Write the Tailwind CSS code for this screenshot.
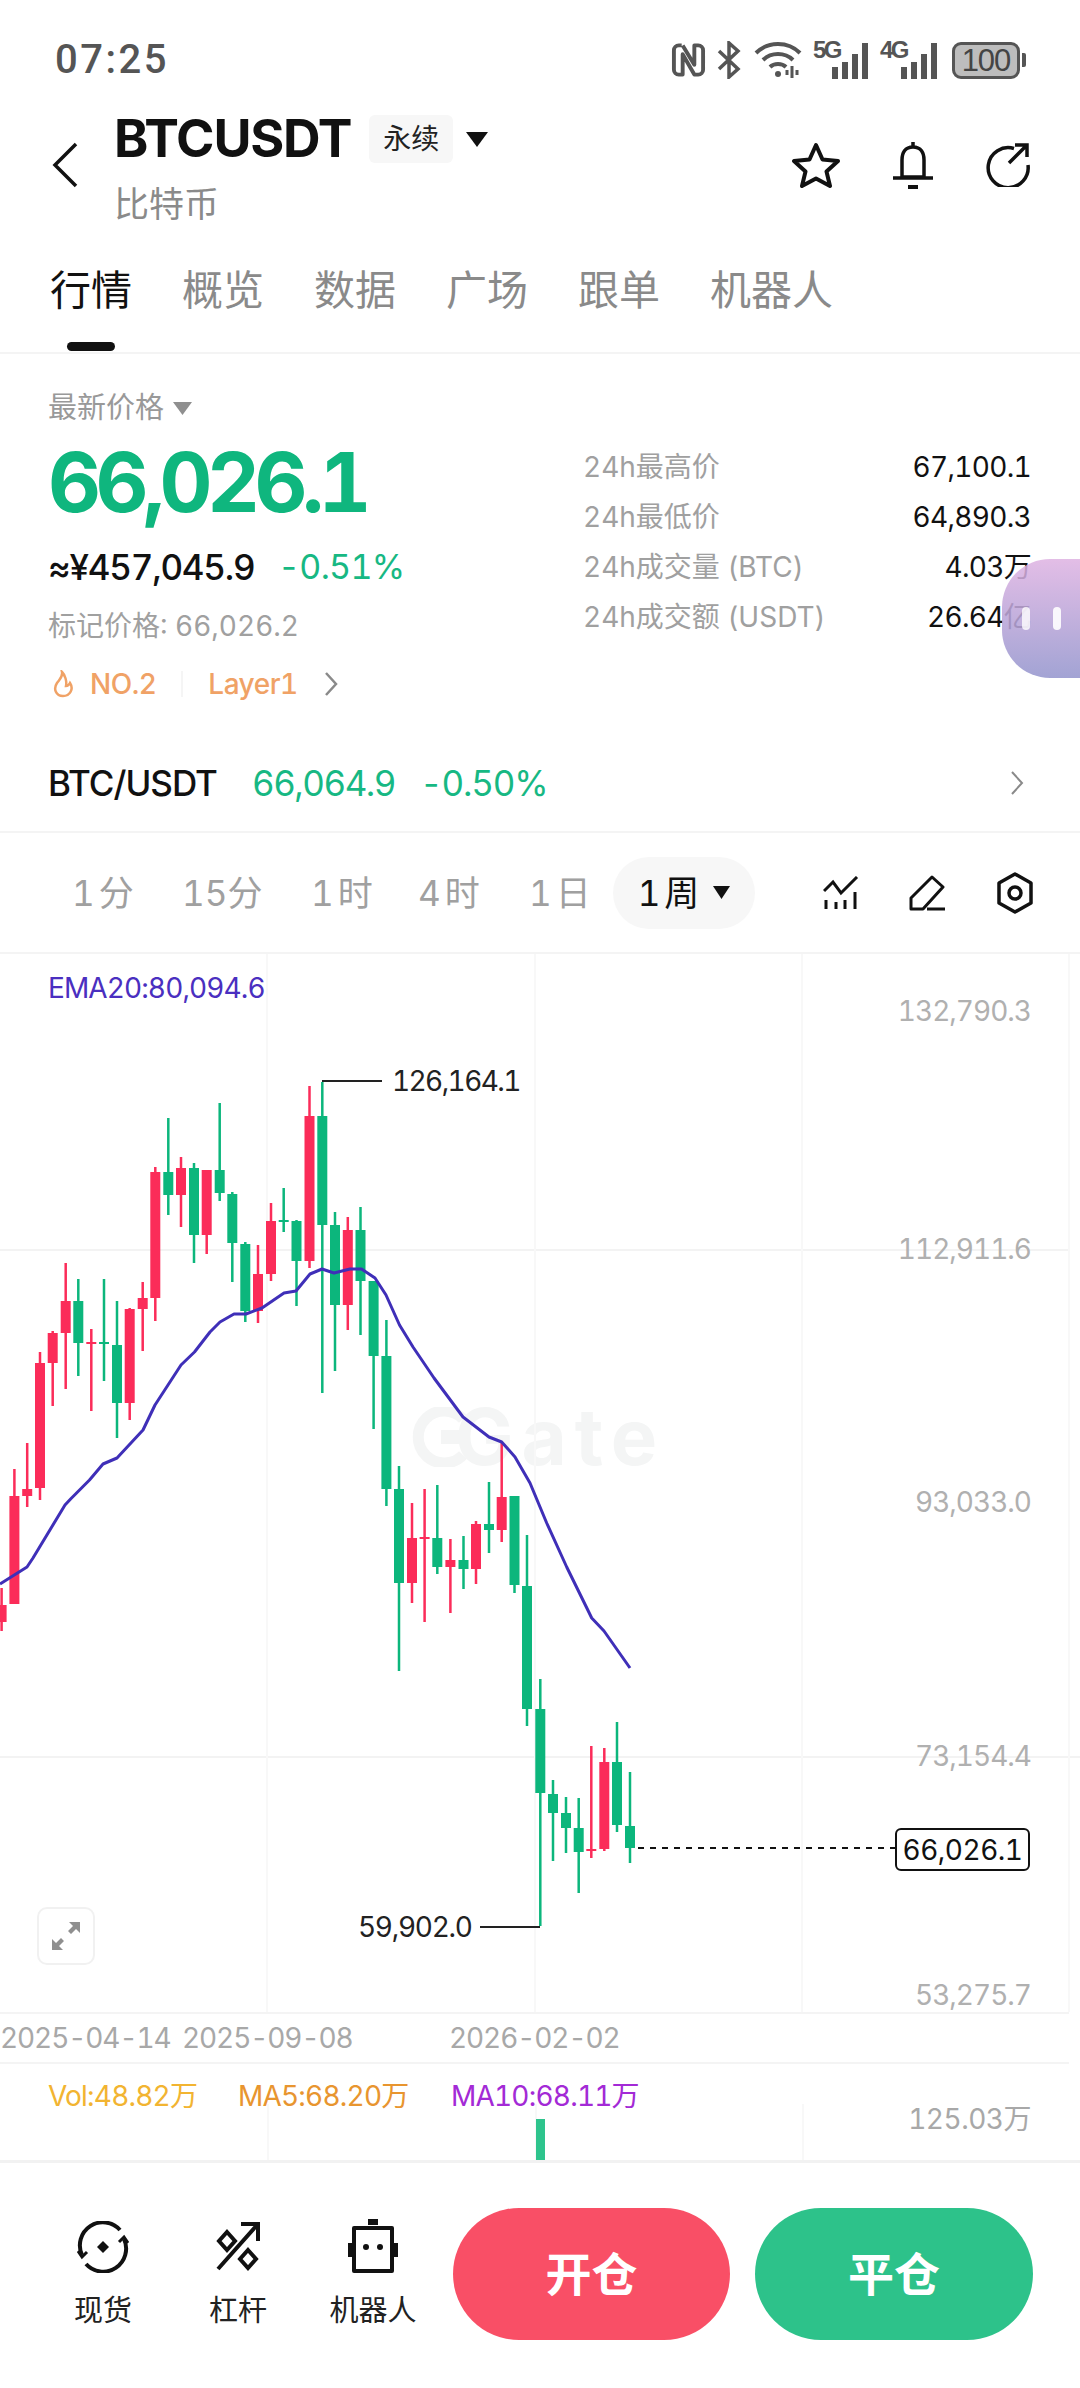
<!DOCTYPE html>
<html lang="zh">
<head>
  <meta charset="UTF-8">
  <meta name="viewport" content="width=device-width, initial-scale=1.0">
  <title>BTCUSDT</title>
  <script src="https://cdn.jsdelivr.net/npm/@tailwindcss/browser@4"></script>
</head>
<body class="bg-white text-[#111] tabular-nums [font-family:Inter,'Noto_Sans_CJK_SC',sans-serif]">
<div class="relative w-[1080px] h-[2388px] overflow-hidden flex flex-col">

  <!-- Status bar -->
  <div class="h-[112px] shrink-0 pl-[55px] pr-[54px] pt-[36px] flex justify-between items-start text-[#555]">
    <span class="text-[40px] leading-[48px] font-medium tracking-[2.5px] [font-family:Roboto,sans-serif]">07:25</span>
    <div class="flex items-center h-[48px]">
      <svg width="35" height="36" viewBox="0 0 36 36" fill="none" stroke="#555" stroke-width="4"><path d="M11 3H8a5 5 0 0 0-5 5v20a5 5 0 0 0 5 5h4V12l12 21h4a5 5 0 0 0 5-5V8a5 5 0 0 0-5-5h-4v20L12 3" stroke-linejoin="round"/></svg>
      <svg class="ml-[10px]" width="26" height="38" viewBox="0 0 26 38" fill="none" stroke="#555" stroke-width="3.5"><path d="M3 10l19 18-9 8V2l9 8L3 28"/></svg>
      <svg class="ml-[12px]" width="48" height="38" viewBox="0 0 48 38" fill="none" stroke="#555" stroke-width="4"><path d="M2 12c12-12 32-12 44 0M9 19c8-8 22-8 30 0M16 26c4-4 12-4 16 0"/><circle cx="24" cy="33" r="3" fill="#555" stroke="none"/><path d="M38 25v12M43 29v5M33 29v5" stroke-width="3"/></svg>
      <div class="relative w-[55px] h-[38px] ml-[11px]">
        <span class="absolute left-0 top-[-4px] text-[24px] leading-[26px] font-bold tracking-[-2.5px] [font-family:'Liberation_Sans',sans-serif]">5G</span>
        <div class="absolute right-0 bottom-0 flex items-end gap-[4px]">
          <i class="block w-[6px] h-[12px] bg-[#555]"></i><i class="block w-[6px] h-[17px] bg-[#555]"></i><i class="block w-[6px] h-[25px] bg-[#555]"></i><i class="block w-[6px] h-[36px] bg-[#555]"></i>
        </div>
      </div>
      <div class="relative w-[57px] h-[38px] ml-[12px]">
        <span class="absolute left-0 top-[-4px] text-[24px] leading-[26px] font-bold tracking-[-2.5px] [font-family:'Liberation_Sans',sans-serif]">4G</span>
        <div class="absolute right-0 bottom-0 flex items-end gap-[4px]">
          <i class="block w-[6px] h-[12px] bg-[#555]"></i><i class="block w-[6px] h-[17px] bg-[#555]"></i><i class="block w-[6px] h-[25px] bg-[#555]"></i><i class="block w-[6px] h-[36px] bg-[#555]"></i>
        </div>
      </div>
      <div class="flex items-center ml-[15px]">
        <div class="w-[68px] h-[37px] rounded-[9px] border-[3px] border-[#555] bg-[#bdbdbd] flex items-center justify-center text-[31px] leading-none tracking-[-1px] text-[#444] [font-family:'Liberation_Sans',sans-serif]">100</div>
        <i class="block w-[4px] h-[14px] ml-[2px] rounded-r-[2px] bg-[#555]"></i>
      </div>
    </div>
  </div>

  <!-- Header -->
  <div class="h-[120px] shrink-0 relative pl-[52px] pr-[50px] flex items-center">
    <svg class="mt-[-14px] mr-[36px]" width="26" height="46" viewBox="0 0 26 46" fill="none" stroke="#111" stroke-width="3.5"><path d="M24 2L3 23l21 21"/></svg>
    <div class="flex-1 self-start pt-[3px]">
      <div class="flex items-center h-[48px]">
        <span class="text-[52px] leading-[48px] font-bold tracking-[-1.2px]">BTCUSDT</span>
        <span class="ml-[18px] w-[84px] h-[48px] rounded-[6px] bg-[#f7f7f7] flex items-center justify-center text-[28px] text-[#222]">永续</span>
        <svg class="ml-[12px]" width="24" height="15" viewBox="0 0 24 15"><path d="M1 0h22L12 15z" fill="#111"/></svg>
      </div>
      <div class="mt-[23px] text-[35px] leading-[36px] text-[#8a8a8a]">比特币</div>
    </div>
    <div class="flex items-center gap-[52px] mt-[-14px]">
      <svg width="48" height="46" viewBox="0 0 48 46" fill="none" stroke="#111" stroke-width="4" stroke-linejoin="round"><path d="M24 3l6.500 14.500L46 19 34.500 29.500 38 44 24 36.500 10 44l3.500-14.500L2 19l15.500-1.500z"/></svg>
      <svg width="42" height="48" viewBox="0 0 42 48" fill="none" stroke="#111" stroke-width="3.500"><path d="M21 6c-8 0-11 6-11 13v17h22V19c0-7-3-13-11-13zM21 1v5M1 37h40"/><path d="M16 46h10" stroke-width="4"/></svg>
      <svg width="44" height="44" viewBox="0 0 44 44" fill="none" stroke="#111" stroke-width="3.500"><path d="M28 5.500A20 20 0 1 0 42 22"/><path d="M23 20L41 2M29 2h12v12"/></svg>
    </div>
  </div>

  <!-- Tabs -->
  <div class="h-[122px] shrink-0 relative border-b-2 border-[#f4f4f4] pl-[50px] flex gap-[50px] pt-[34px] text-[41px] leading-[48px] text-[#8a8a8a]">
    <span class="text-[#111]">行情</span><span>概览</span><span>数据</span><span>广场</span><span>跟单</span><span>机器人</span>
    <i class="absolute left-[67px] bottom-[1px] w-[48px] h-[9px] rounded-full bg-[#111]"></i>
  </div>

  <!-- Price block -->
  <div class="h-[479px] shrink-0 relative border-b-2 border-[#f4f4f4] pl-[48px] pr-[49px] flex">
    <div class="w-[535px] shrink-0">
      <div class="mt-[36px] flex items-center text-[29px] leading-[36px] text-[#999]">最新价格
        <svg class="ml-[9px]" width="19" height="13" viewBox="0 0 19 13"><path d="M0 0h19L9.500 13z" fill="#8f8f8f"/></svg>
      </div>
      <div class="mt-[9px] text-[82px] leading-[96px] font-bold tracking-[-5.5px] text-[#0fb67e]">66,026.1</div>
      <div class="mt-[14px] flex items-center text-[35px] leading-[44px]">
        <span class="font-medium tracking-[-1.2px] w-[230px]">≈¥457,045.9</span>
        <span class="text-[#17b883] text-[34px] tracking-[-0.7px]">-0.51%</span>
      </div>
      <div class="mt-[17px] text-[28px] leading-[40px] text-[#a0a0a0]">标记价格: 66,026.2</div>
      <div class="mt-[18px] flex items-center text-[28px] leading-[40px] text-[#f0a266]">
        <svg class="ml-[4px]" width="23" height="28" viewBox="0 0 23 28" fill="none" stroke="#f0a266" stroke-width="2.500"><path d="M10 2c1 5-2 7-5 11-4 6-1 13 6 13s11-7 7-13c-1 2-2 3-4 3 1-5-1-11-4-14z"/></svg>
        <span class="ml-[15px] font-medium tracking-[-0.5px]">NO.2</span>
        <i class="block w-[2px] h-[26px] bg-[#f5f5f5] mx-[25px]"></i>
        <span class="font-medium tracking-[-0.5px]">Layer1</span>
        <svg class="ml-[26px]" width="14" height="26" viewBox="0 0 14 26" fill="none" stroke="#8a8a8a" stroke-width="2.500"><path d="M2 2l10 11L2 24"/></svg>
      </div>
    </div>
    <div class="flex-1 pt-[88px] text-[28px] leading-[50px] text-[#a0a0a0]">
      <div class="flex justify-between"><span>24h最高价</span><span class="text-[#111] tracking-[-0.7px]">67,100.1</span></div>
      <div class="flex justify-between"><span>24h最低价</span><span class="text-[#111] tracking-[-0.7px]">64,890.3</span></div>
      <div class="flex justify-between"><span>24h成交量 (BTC)</span><span class="text-[#111] tracking-[-0.7px]">4.03万</span></div>
      <div class="flex justify-between"><span>24h成交额 (USDT)</span><span class="text-[#111] tracking-[-0.7px]">26.64亿</span></div>
    </div>
    <div class="absolute left-[48px] right-[48px] bottom-[26px] flex items-center text-[35px] leading-[44px]">
      <span class="font-medium tracking-[-1px]">BTC/USDT</span>
      <span class="ml-[35px] text-[#17b883] tracking-[-1.5px]">66,064.9</span>
      <span class="ml-[25px] text-[#17b883] tracking-[-1.2px]">-0.50%</span>
      <svg class="ml-auto mr-[8px]" width="14" height="26" viewBox="0 0 14 26" fill="none" stroke="#8a8a8a" stroke-width="2"><path d="M2 2l10 11L2 24"/></svg>
    </div>
  </div>

  <!-- Interval row -->
  <div class="h-[121px] shrink-0 relative border-b-2 border-[#f4f4f4] pl-[72px] flex items-center text-[35px] leading-[44px] text-[#a0a0a0]">
    <span class="w-[110px] tracking-[4px]">1分</span>
    <span class="w-[129px]">15分</span>
    <span class="w-[107px] tracking-[4px]">1时</span>
    <span class="w-[111px] tracking-[4px]">4时</span>
    <span class="w-[84px] tracking-[4px]">1日</span>
    <div class="w-[142px] h-[72px] rounded-full bg-[#f7f7f7] flex items-center justify-center text-[#111]">
      <span class="tracking-[4px]">1周</span>
      <svg class="ml-[10px]" width="17" height="13" viewBox="0 0 17 13"><path d="M0 0h17L8.500 13z" fill="#111"/></svg>
    </div>
    <div class="ml-auto mr-[47px] flex items-center gap-[50px]">
      <svg width="36" height="33" viewBox="0 0 36 33" fill="none" stroke="#111" stroke-width="3"><path d="M1 15l9-9 8 11L34 1"/><path d="M3 24v9M13 26v7M22 24v9M32 16v17"/></svg>
      <svg width="38" height="36" viewBox="0 0 38 36" fill="none" stroke="#111" stroke-width="3" stroke-linejoin="round"><path d="M2 34V23L23 2l11 10-20 22zM18 34h18"/></svg>
      <svg width="36" height="42" viewBox="0 0 36 42" fill="none" stroke="#111" stroke-width="3.500" stroke-linejoin="round"><path d="M18 2l16 9v20l-16 9-16-9V11z"/><circle cx="18" cy="21" r="6"/></svg>
    </div>
  </div>

  <!-- Main chart -->
  <div class="h-[1058px] shrink-0 relative text-[28px] leading-[34px] tracking-[-1px]" id="chart">
    <div class="absolute left-[411px] top-[451px] flex items-center text-[#f4f5f5] text-[78px] leading-[64px] font-bold tracking-[8px]">
      <svg width="60" height="60" viewBox="0 0 60 60" fill="none"><path d="M52 48A26 26 0 1 1 52 12" stroke="#f4f5f5" stroke-width="11"/><rect x="30" y="23" width="26" height="14" fill="#f4f5f5"/></svg>
      <span class="-ml-[16px]">Gate</span>
    </div>
    <svg id="candles" class="absolute left-0 top-0" width="1080" height="1058" viewBox="0 954 1080 1058"></svg>
    <span class="absolute left-[48px] top-[17px] text-[#4a2fc0] tracking-[-0.9px]">EMA20:80,094.6</span>
    <span class="absolute right-[49px] top-[40px] text-[#b0b0b0]">132,790.3</span>
    <span class="absolute right-[49px] top-[278px] text-[#b0b0b0]">112,911.6</span>
    <span class="absolute right-[49px] top-[531px] text-[#b0b0b0]">93,033.0</span>
    <span class="absolute right-[49px] top-[785px] text-[#b0b0b0]">73,154.4</span>
    <span class="absolute right-[49px] top-[1024px] text-[#b0b0b0]">53,275.7</span>
    <span class="absolute left-[392px] top-[110px] text-[#222] tracking-[-1.6px]">126,164.1</span>
    <span class="absolute left-[358px] top-[956px] text-[#222] tracking-[-1.3px]">59,902.0</span>
    <div class="absolute left-[895px] top-[874px] w-[135px] h-[43px] rounded-[6px] border-2 border-[#111] bg-white flex items-center justify-center text-[#111] tracking-[-0.5px]">66,026.1</div>
    <div class="absolute left-[37px] top-[953px] w-[58px] h-[58px] rounded-[10px] border-2 border-[#f1f1f1] bg-white flex items-center justify-center">
      <svg width="30" height="30" viewBox="0 0 30 30" fill="#8f8f8f"><path d="M18 1h11v11l-4-4-5 5-3-3 5-5zM1 18l4 4 5-5 3 3-5 5 4 4H1z"/></svg>
    </div>
  </div>

  <!-- Date axis -->
  <div class="h-[52px] shrink-0 relative mr-[11px] border-y-2 border-[#f4f4f4] flex items-center text-[28px] leading-[34px] text-[#a8a8a8] tracking-[-1.1px] whitespace-nowrap">
    <span class="w-[182px]">2025-04-14</span>
    <span class="w-[267px]">2025-09-08</span>
    <span>2026-02-02</span>
  </div>

  <!-- Volume -->
  <div class="h-[99px] shrink-0 relative border-b-[3px] border-[#f2f2f2] text-[28px] leading-[34px] tracking-[-0.8px]">
    <i class="absolute left-[267px] top-[40px] bottom-0 w-[2px] bg-[#f8f8f8]"></i>
    <i class="absolute left-[535px] top-[40px] bottom-0 w-[2px] bg-[#f8f8f8]"></i>
    <i class="absolute left-[802px] top-[40px] bottom-0 w-[2px] bg-[#f8f8f8]"></i>
    <div class="pl-[48px] pt-[15px] flex">
      <span class="w-[190px] text-[#f2b431]">Vol:48.82万</span>
      <span class="w-[213px] text-[#e8952f]">MA5:68.20万</span>
      <span class="text-[#a32ad6]">MA10:68.11万</span>
    </div>
    <span class="absolute right-[49px] top-[38px] text-[#a8a8a8] tracking-[-0.5px]">125.03万</span>
    <i class="absolute left-[536px] top-[55px] bottom-0 w-[9px] bg-[#2ec48d]"></i>
  </div>

  <!-- Bottom bar -->
  <div class="flex-1 relative pl-[53px] pr-[47px] pt-[45px] flex items-start">
    <div class="w-[100px] flex flex-col items-center">
      <svg class="mt-[13px]" width="52" height="52" viewBox="0 0 52 52" fill="none" stroke="#111" stroke-width="4"><path d="M5 34A23 23 0 0 1 43 9M47 18A23 23 0 0 1 9 43"/><path d="M26 20l6 6-6 6-6-6z" fill="#111" stroke="none"/><path d="M1 30l4 6 5-5M51 22l-4-6-5 5" stroke-width="3"/></svg>
      <span class="mt-[20px] text-[29px] leading-[36px] text-[#222]">现货</span>
    </div>
    <div class="w-[170px] flex flex-col items-center">
      <svg class="mt-[13px]" width="46" height="50" viewBox="0 0 46 50" fill="none" stroke="#111" stroke-width="4"><path d="M3 48L42 4M26 3h17v17"/><path d="M12 11l8 9-8 9-8-9zM33 29l8 9-8 9-8-9z"/></svg>
      <span class="mt-[22px] text-[29px] leading-[36px] text-[#222]">杠杆</span>
    </div>
    <div class="w-[100px] flex flex-col items-center">
      <svg class="mt-[11px]" width="50" height="54" viewBox="0 0 50 54" fill="none" stroke="#111" stroke-width="4"><path d="M6 9h38v43H6z" stroke-linejoin="round"/><path d="M2 24v14M48 24v14"/><path d="M20 3h10" stroke-width="6"/><circle cx="18" cy="28" r="3" fill="#111" stroke="none"/><circle cx="32" cy="28" r="3" fill="#111" stroke="none"/></svg>
      <span class="mt-[20px] text-[29px] leading-[36px] text-[#222] whitespace-nowrap">机器人</span>
    </div>
    <div class="ml-[30px] w-[277px] h-[132px] rounded-full bg-[#f94f66] flex items-center justify-center text-white text-[46px] font-bold">开仓</div>
    <div class="ml-[25px] w-[278px] h-[132px] rounded-full bg-[#2dc28a] flex items-center justify-center text-white text-[46px] font-bold">平仓</div>
  </div>

  <!-- Floating assistant -->
  <div class="absolute left-[1002px] top-[559px] w-[90px] h-[119px] rounded-l-[48px] bg-gradient-to-b from-[#deb2e2]/85 to-[#9899cf]/90 flex items-center gap-[23px] pl-[20px]">
    <i class="block w-[8px] h-[23px] rounded-full bg-white/80"></i>
    <i class="block w-[8px] h-[23px] rounded-full bg-white/90"></i>
  </div>
</div>

<script>
  const svg = document.getElementById('candles');
  const NS = 'http://www.w3.org/2000/svg';
  const RED = '#fb2c59', GREEN = '#0cb67c';

  const add = (tag, attrs) => {
    const el = document.createElementNS(NS, tag);
    Object.entries(attrs).forEach(([k, v]) => el.setAttribute(k, v));
    svg.appendChild(el);
    return el;
  };

  // grid
  [[0, 1250, 1069, 1250], [0, 1757, 1080, 1757]].forEach(([x1, y1, x2, y2]) =>
    add('line', { x1, y1, x2, y2, stroke: '#f3f3f3', 'stroke-width': 2 }));
  [267, 535, 802, 1069].forEach(x =>
    add('line', { x1: x, y1: 954, x2: x, y2: 2012, stroke: '#f8f8f8', 'stroke-width': 2 }));

  // x, colour (r/g), wick top, body top, body bottom, wick bottom
  const candles = [
    [1.6,'r',1588,1605,1622,1631],[14.4,'r',1469,1496,1604,1604],[27.2,'r',1443,1489,1496,1507],
    [40,'r',1352,1363,1488,1500],[52.7,'r',1331,1333,1363,1406],[65.7,'r',1263,1301,1333,1389],
    [78.3,'g',1279,1301,1343,1376],[91.3,'r',1329,1342,1344,1411],[104,'g',1279,1342,1344,1381],
    [117,'g',1301,1345,1403,1438],[129.7,'r',1308,1309,1403,1420],[142.7,'r',1282,1298,1309,1351],
    [155.3,'r',1167,1172,1298,1321],[168.3,'g',1118,1172,1195,1215],[181,'r',1157,1168,1195,1227],
    [194,'g',1163,1168,1235,1263],[206.7,'r',1170,1170,1235,1254],[219.7,'g',1103,1170,1193,1201],
    [232.3,'g',1192,1194,1243,1282],[245.3,'g',1242,1244,1311,1322],[258,'r',1245,1274,1311,1323],
    [271,'r',1203,1221,1274,1281],[283.7,'g',1188,1220,1222,1232],[296.5,'g',1220,1221,1261,1306],
    [309.5,'r',1086,1116,1261,1268],[322.3,'g',1082,1116,1225,1393],[335,'g',1212,1225,1305,1371],
    [347.8,'r',1217,1230,1305,1330],[360.5,'g',1207,1230,1281,1335],[373.6,'g',1281,1281,1356,1429],
    [386.4,'g',1320,1356,1489,1506],[399,'g',1466,1489,1583,1671],[412,'r',1503,1538,1583,1603],
    [424.6,'r',1489,1537,1539,1622],[437.3,'g',1485,1538,1567,1574],[450.4,'r',1539,1560,1567,1613],
    [463.5,'g',1536,1560,1569,1589],[476,'r',1521,1524,1569,1584],[489,'g',1482,1524,1530,1553],
    [501.7,'r',1442,1497,1530,1542],[514.5,'g',1496,1496,1585,1593],[527,'g',1535,1586,1709,1726],
    [540.3,'g',1679,1709,1793,1926],[553,'g',1780,1794,1813,1861],[566,'g',1797,1813,1828,1853],
    [578.7,'g',1798,1828,1852,1893],[591.3,'r',1746,1849,1851,1858],[604.3,'r',1748,1762,1849,1851],
    [617,'g',1722,1762,1825,1832],[630,'g',1772,1826,1848,1863]
  ];

  candles.forEach(([x, c, wt, bt, bb, wb]) => {
    const fill = c === 'r' ? RED : GREEN;
    add('rect', { x: x - 1.25, y: wt, width: 2.5, height: wb - wt, fill });
    add('rect', { x: x - 5, y: bt, width: 10, height: bb - bt, fill });
  });

  // EMA20
  const ema = [[0,1584],[27,1567],[33,1558],[65,1505],[70.6,1499],[89.5,1480],[103,1464],[117,1458],[143,1430],[155,1405],
    [181,1365],[194.5,1352],[210,1332],[220,1322],[234,1314],[246,1314],[262,1308],[284,1293],[296,1291],[310,1274],
    [322,1269],[334,1273],[350,1269],[361.5,1269],[375,1278],[386,1295],[399.5,1325],[413,1347],[434,1378],[463,1417],
    [489,1437],[501.7,1442],[515,1457],[530,1483],[546.7,1523],[566.7,1567],[591.7,1618],[604,1631],[630,1668]];
  add('polyline', { points: ema.map(p => p.join(',')).join(' '), fill: 'none', stroke: '#3f2fb8', 'stroke-width': 3, 'stroke-linejoin': 'round' });

  // high / low / last price markers
  add('path', { d: 'M322 1081H382M480 1927H540', fill: 'none', stroke: '#222', 'stroke-width': 2 });
  add('line', { x1: 638, y1: 1848, x2: 896, y2: 1848, stroke: '#111', 'stroke-width': 2, 'stroke-dasharray': '6 6' });
</script>
</body>
</html>
